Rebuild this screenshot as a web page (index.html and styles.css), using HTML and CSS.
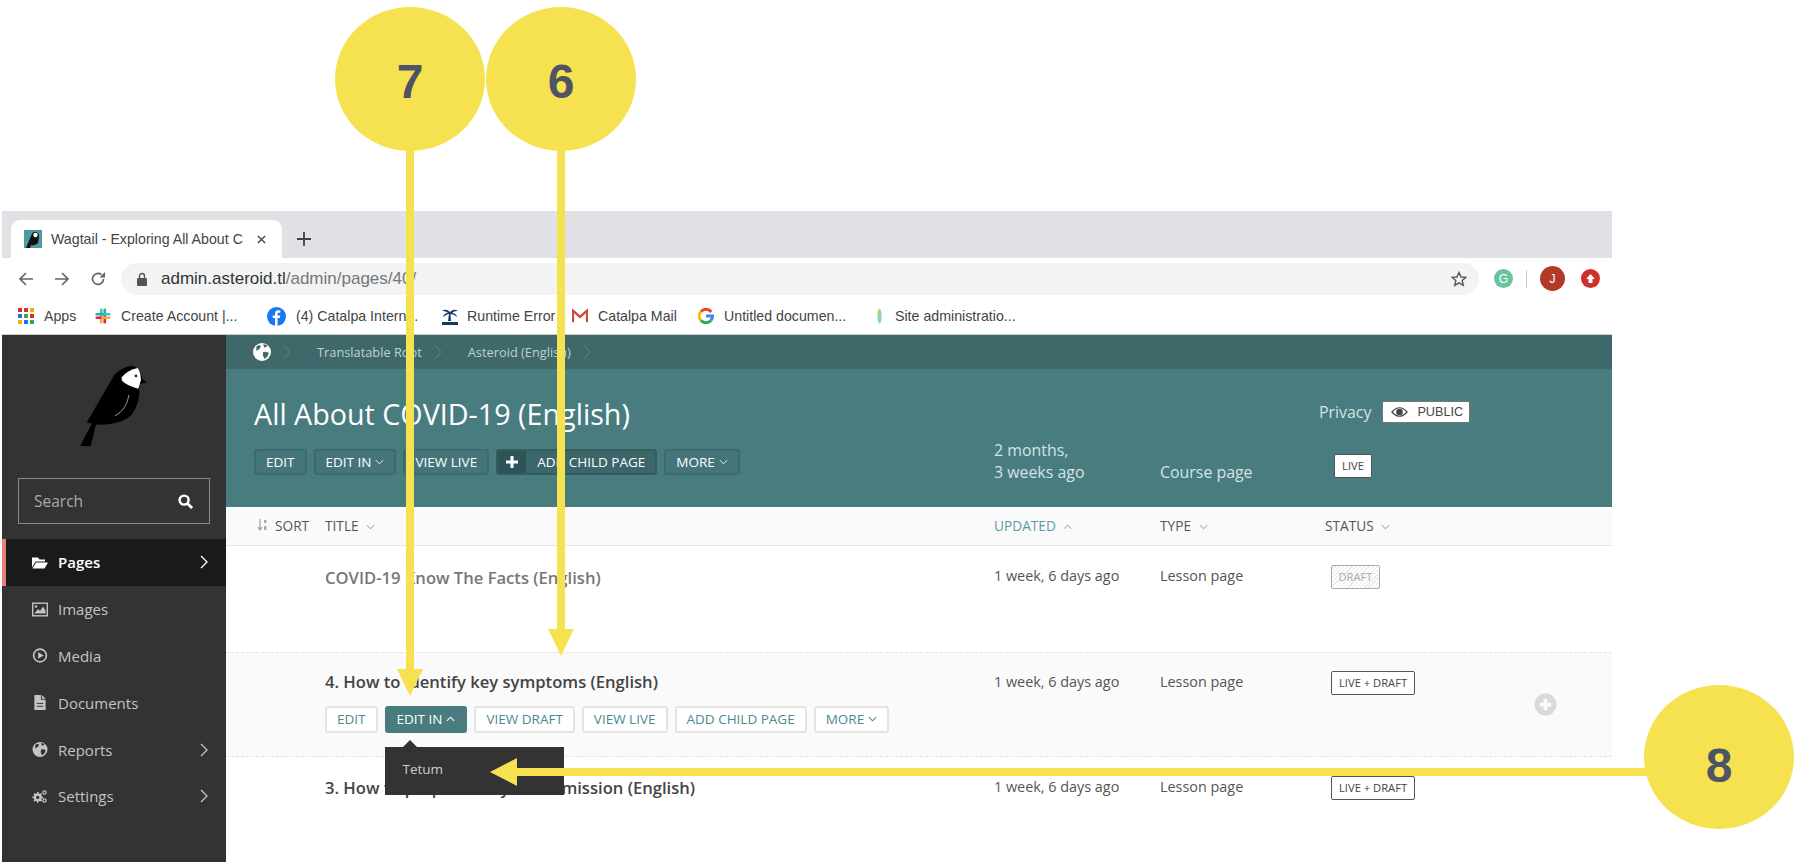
FILE: index.html
```html
<!DOCTYPE html>
<html lang="en">
<head>
  <meta charset="UTF-8" />
  <title>Wagtail - Exploring All About COVID-19</title>
  <link rel="stylesheet" href="styles.css">
</head>
<body>

<div class="browser">
  <div class="tabbar">
    <div class="tab">
      <svg class="favicon" viewBox="0 0 18 18"><rect width="18" height="18" fill="#4d9ba0"/><path d="M2 18L7 6Q9 1 12 2Q15 3 15 6L14 13Q11 16 7 15L6 18Z" fill="#111"/><circle cx="11.5" cy="5" r="2.2" fill="#fff"/></svg>
      <span class="tab-title">Wagtail - Exploring All About C</span>
      <svg class="tab-close" viewBox="0 0 10 10"><path d="M1 1L9 9M9 1L1 9" stroke="#444" stroke-width="1.5"/></svg>
    </div>
    <svg class="tab-new" viewBox="0 0 14 14"><path d="M7 0V14M0 7H14" stroke="#444" stroke-width="1.8"/></svg>
  </div>

  <div class="toolbar">
    <svg class="nav-icon" viewBox="0 0 16 16"><path d="M15 8H2M8 2L2 8L8 14" fill="none" stroke="#666" stroke-width="1.7"/></svg>
    <svg class="nav-icon" viewBox="0 0 16 16"><path d="M1 8H14M8 2L14 8L8 14" fill="none" stroke="#666" stroke-width="1.7"/></svg>
    <svg class="nav-icon" viewBox="0 0 16 16"><path d="M13.5 8A5.5 5.5 0 1 1 11.5 3.7" fill="none" stroke="#666" stroke-width="1.7"/><path d="M9.5 6.5H15V1Z" fill="#666"/></svg>
    <div class="omnibox">
      <svg class="lock" viewBox="0 0 10 14"><path d="M2.5 6V4A2.5 2.5 0 0 1 7.5 4V6" fill="none" stroke="#555" stroke-width="1.4"/><rect y="6" width="10" height="8" rx="1" fill="#555"/></svg>
      <span class="url"><b>admin.asteroid.tl</b>/admin/pages/40/</span>
      <svg class="star" viewBox="0 0 16 16"><path d="M8 1.5L10 6L14.8 6.4L11.2 9.6L12.3 14.4L8 11.8L3.7 14.4L4.8 9.6L1.2 6.4L6 6Z" fill="none" stroke="#555" stroke-width="1.4"/></svg>
    </div>
    <div class="ext ext-g">G</div>
    <div class="ext-sep"></div>
    <div class="ext ext-j">J</div>
    <div class="ext ext-up"><svg viewBox="0 0 10 10"><path d="M5 1L9 5.5H6.8V9H3.2V5.5H1Z" fill="#fff"/></svg></div>
  </div>

  <div class="bookmarks">
    <div class="bm">
      <svg class="bm-icon" viewBox="0 0 16 16"><g fill="#d93025"><rect width="4" height="4"/><rect x="6" width="4" height="4"/></g><rect x="12" width="4" height="4" fill="#f9ab00"/><rect y="6" width="4" height="4" fill="#1a73e8"/><rect x="6" y="6" width="4" height="4" fill="#34a853"/><rect x="12" y="6" width="4" height="4" fill="#d93025"/><rect y="12" width="4" height="4" fill="#f9ab00"/><rect x="6" y="12" width="4" height="4" fill="#1a73e8"/><rect x="12" y="12" width="4" height="4" fill="#34a853"/></svg>
      <span>Apps</span>
    </div>
    <div class="bm">
      <svg class="bm-icon" viewBox="0 0 18 18"><g stroke-width="3" stroke-linecap="round"><path d="M7 2V9" stroke="#36c5f0"/><path d="M2 7H9" stroke="#2eb67d"/><path d="M11 16V9" stroke="#e01e5a"/><path d="M16 11H9" stroke="#ecb22e"/><path d="M11 2V7" stroke="#2eb67d"/><path d="M7 16V11" stroke="#ecb22e"/><path d="M16 7H12" stroke="#36c5f0"/><path d="M2 11H6" stroke="#e01e5a"/></g></svg>
      <span>Create Account |...</span>
    </div>
    <div class="bm">
      <svg class="bm-icon bm-fb" viewBox="0 0 18 18"><circle cx="9" cy="9" r="9" fill="#1877f2"/><path d="M10 18V10.5H12.2L12.6 8H10V6.6Q10 5.4 11.2 5.4H12.7V3.2Q11.8 3 10.8 3Q7.6 3 7.6 6.2V8H5.4V10.5H7.6V18Z" fill="#fff"/></svg>
      <span>(4) Catalpa Intern...</span>
    </div>
    <div class="bm">
      <svg class="bm-icon bm-palm" viewBox="0 0 20 18"><path d="M10 5Q6 1 2 4Q6 3.500 8 6Q4 6 3 10Q7 7 9 7L8 14H11L10.500 7Q14 7 17 10Q16 6 12 6Q14 3.500 18 4Q14 1 10 5Z" fill="#17375e"/><path d="M2 15H18V18H2Z" fill="#17375e"/></svg>
      <span>Runtime Error</span>
    </div>
    <div class="bm">
      <svg class="bm-icon" viewBox="0 0 18 16"><path d="M1 15V2L9 9L17 2V15" fill="none" stroke="#d0473a" stroke-width="2.6"/></svg>
      <span>Catalpa Mail</span>
    </div>
    <div class="bm">
      <svg class="bm-icon" viewBox="0 0 16 16"><g fill="none" stroke-width="3"><path d="M13.2 4A6.500 6.500 0 0 0 3 3.600" stroke="#ea4335"/><path d="M3 3.600A6.500 6.500 0 0 0 3 12.400" stroke="#fbbc05"/><path d="M3 12.400A6.500 6.500 0 0 0 13 12.400" stroke="#34a853"/><path d="M13 12.400Q14.500 10.500 14.500 8H8" stroke="#4285f4"/></g></svg>
      <span>Untitled documen...</span>
    </div>
    <div class="bm bm-site">
      <svg class="bm-leaf" viewBox="0 0 6 18"><defs><linearGradient id="leaf" x1="0" y1="0" x2="0" y2="1"><stop offset="0" stop-color="#b9d66b"/><stop offset="1" stop-color="#6fd0e6"/></linearGradient></defs><ellipse cx="3" cy="9" rx="2.500" ry="9" fill="url(#leaf)"/></svg>
      <span>Site administratio...</span>
    </div>
  </div>

  <div class="app">
    <aside class="sidebar">
      <svg class="logo" viewBox="240 88 205 248">
        <path d="M240 333L276 265L260 262L345 115Q375 90 400 90Q425 100 428 130L442 140L418 146Q425 200 395 240Q360 272 288 268L272 333Z" fill="#000"/>
        <path d="M366 125Q385 102 414 97Q424 110 424 134L416 160Q380 150 366 135Z" fill="#fff"/>
        <circle cx="409" cy="121" r="4" fill="#222"/>
        <path d="M388 178Q380 225 345 242" fill="none" stroke="#ddd" stroke-width="2"/>
      </svg>
      <div class="search">
        <span>Search</span>
        <svg viewBox="0 0 16 16"><circle cx="6.500" cy="6.500" r="4.800" fill="none" stroke="#fff" stroke-width="2.600"/><path d="M10 10L15 15" stroke="#fff" stroke-width="3"/></svg>
      </div>
      <nav class="menu">
        <a class="menu-item active">
          <svg viewBox="0 0 16 14"><path d="M0 2H6L7.500 4H13V6H3.500L0 12Z M4 7H16L12.500 13H0.500Z" fill="currentColor"/></svg>
          <span>Pages</span>
          <svg class="chev" viewBox="0 0 8 14"><path d="M1 1L7 7L1 13" fill="none" stroke="currentColor" stroke-width="1.300"/></svg>
        </a>
        <a class="menu-item">
          <svg viewBox="0 0 16 14"><rect x=".7" y=".7" width="14.600" height="12.600" fill="none" stroke="currentColor" stroke-width="1.400"/><path d="M2.500 11L6 6.500L8 8.500L11 4L13.500 8V11Z" fill="currentColor"/><circle cx="4" cy="4" r="1.300" fill="currentColor"/></svg>
          <span>Images</span>
        </a>
        <a class="menu-item">
          <svg viewBox="0 0 16 16"><circle cx="8" cy="8" r="6.800" fill="none" stroke="currentColor" stroke-width="1.800"/><path d="M6 4.500L12 8L6 11.500Z" fill="currentColor"/></svg>
          <span>Media</span>
        </a>
        <a class="menu-item">
          <svg viewBox="0 0 16 16"><path d="M2 0H9V5H14V16H2Z M10 0L14 4H10Z" fill="currentColor"/><path d="M4.500 9H11.500M4.500 12H11.500" stroke="#333" stroke-width="1"/></svg>
          <span>Documents</span>
        </a>
        <a class="menu-item">
          <svg viewBox="0 0 16 16"><circle cx="8" cy="8" r="8" fill="currentColor"/><path d="M3 3Q6 1 7 3Q6 6 3 7Z M9 8Q13 7 14 9Q13 13 10 14Q8 11 9 8Z M9 1Q12 1 13 3L10 4Z" fill="#333"/></svg>
          <span>Reports</span>
          <svg class="chev" viewBox="0 0 8 14"><path d="M1 1L7 7L1 13" fill="none" stroke="currentColor" stroke-width="1.300"/></svg>
        </a>
        <a class="menu-item">
          <svg viewBox="0 0 18 16"><g fill="none" stroke="currentColor"><circle cx="6.500" cy="9" r="3.200" stroke-width="3"/><circle cx="14" cy="3.500" r="1.800" stroke-width="1.400"/><circle cx="14" cy="12.500" r="1.800" stroke-width="1.400"/></g><path d="M6.500 3V15M0.500 9H12.500M2.300 4.800L10.700 13.200M10.700 4.800L2.300 13.200" stroke="currentColor" stroke-width="1.800"/><circle cx="6.500" cy="9" r="1.800" fill="#333"/></svg>
          <span>Settings</span>
          <svg class="chev" viewBox="0 0 8 14"><path d="M1 1L7 7L1 13" fill="none" stroke="currentColor" stroke-width="1.300"/></svg>
        </a>
      </nav>
    </aside>

    <main class="content">
      <div class="crumbs">
        <svg class="crumb-globe" viewBox="0 0 16 16"><circle cx="8" cy="8" r="8" fill="#fff"/><path d="M3 3Q6 1 7 3Q6 6 3 7Z M9 8Q13 7 14 9Q13 13 10 14Q8 11 9 8Z M9 1Q12 1 13 3L10 4Z" fill="#3e6869"/></svg>
        <svg class="crumb-sep" viewBox="0 0 8 14"><path d="M1 0L7 7L1 14" fill="none" stroke="#4f7d7f" stroke-width="1.200"/></svg>
        <span class="crumb">Translatable Root</span>
        <svg class="crumb-sep" viewBox="0 0 8 14"><path d="M1 0L7 7L1 14" fill="none" stroke="#4f7d7f" stroke-width="1.200"/></svg>
        <span class="crumb">Asteroid (English)</span>
        <svg class="crumb-sep" viewBox="0 0 8 14"><path d="M1 0L7 7L1 14" fill="none" stroke="#4f7d7f" stroke-width="1.200"/></svg>
      </div>

      <header class="page-head">
        <div class="head-main">
          <h1>All About COVID-19 (English)</h1>
          <div class="btns">
            <a class="btn">Edit</a>
            <a class="btn">Edit in <svg class="caret" viewBox="0 0 10 6"><path d="M1 1L5 5L9 1" fill="none" stroke="currentColor" stroke-width="1"/></svg></a>
            <a class="btn">View live</a>
            <a class="btn btn-add"><i><svg viewBox="0 0 12 12"><path d="M6 0V12M0 6H12" stroke="#fff" stroke-width="3"/></svg></i><span>Add child page</span></a>
            <a class="btn">More <svg class="caret" viewBox="0 0 10 6"><path d="M1 1L5 5L9 1" fill="none" stroke="currentColor" stroke-width="1"/></svg></a>
          </div>
        </div>
        <div class="head-cell">2 months,<br>3 weeks ago</div>
        <div class="head-cell">Course page</div>
        <div class="head-status">
          <div class="privacy">
            <span>Privacy</span>
            <span class="public">
              <svg viewBox="0 0 18 12"><path d="M1 6Q9 -3 17 6Q9 15 1 6Z" fill="none" stroke="#444" stroke-width="1.300"/><circle cx="9" cy="6" r="3.500" fill="#444"/></svg>
              PUBLIC
            </span>
          </div>
          <span class="badge badge-live">LIVE</span>
        </div>
      </header>

      <div class="row-grid table-head">
        <div class="sort">
          <svg viewBox="0 0 10 12"><path d="M3 0V10M1 8L3 11L5 8" fill="none" stroke="#999" stroke-width="1.100"/><path d="M7 1H9.500V4H7ZM7 7H9.500V11H7Z" fill="#aaa"/></svg>
          Sort
        </div>
        <div>Title <svg class="caret" viewBox="0 0 10 6"><path d="M1 1L5 5L9 1" fill="none" stroke="#888" stroke-width="1"/></svg></div>
        <div class="sorted">Updated <svg class="caret" viewBox="0 0 10 6"><path d="M1 5L5 1L9 5" fill="none" stroke="#5b9aa0" stroke-width="1"/></svg></div>
        <div>Type <svg class="caret" viewBox="0 0 10 6"><path d="M1 1L5 5L9 1" fill="none" stroke="#888" stroke-width="1"/></svg></div>
        <div>Status <svg class="caret" viewBox="0 0 10 6"><path d="M1 1L5 5L9 1" fill="none" stroke="#888" stroke-width="1"/></svg></div>
      </div>

      <div class="row-grid page-row row-first">
        <div class="title-cell"><h2 class="muted">COVID-19 Know The Facts (English)</h2></div>
        <div class="cell">1 week, 6 days ago</div>
        <div class="cell">Lesson page</div>
        <div class="cell"><span class="badge badge-draft">DRAFT</span></div>
      </div>

      <div class="row-grid page-row hovered">
        <div class="title-cell">
          <h2>4. How to identify key symptoms (English)</h2>
          <div class="actions">
            <a class="act">Edit</a>
            <div class="act-wrap">
              <a class="act act-on">Edit in <svg class="caret" viewBox="0 0 10 6"><path d="M1 5L5 1L9 5" fill="none" stroke="currentColor" stroke-width="1.200"/></svg></a>
              <div class="dropdown">Tetum</div>
            </div>
            <a class="act">View draft</a>
            <a class="act">View live</a>
            <a class="act">Add child page</a>
            <a class="act">More <svg class="caret" viewBox="0 0 10 6"><path d="M1 1L5 5L9 1" fill="none" stroke="currentColor" stroke-width="1.200"/></svg></a>
          </div>
        </div>
        <div class="cell">1 week, 6 days ago</div>
        <div class="cell">Lesson page</div>
        <div class="cell"><span class="badge">LIVE + DRAFT</span></div>
        <div class="add-cell">
          <svg viewBox="0 0 24 24"><circle cx="12" cy="12" r="11.500" fill="#d9d9d9"/><path d="M12 6V18M6 12H18" stroke="#fafafa" stroke-width="4"/></svg>
        </div>
      </div>

      <div class="row-grid page-row">
        <div class="title-cell"><h2>3. How to prepare for your admission (English)</h2></div>
        <div class="cell">1 week, 6 days ago</div>
        <div class="cell">Lesson page</div>
        <div class="cell"><span class="badge">LIVE + DRAFT</span></div>
      </div>
    </main>
  </div>
</div>

<!-- callouts drawn over the screenshot -->
<svg class="callouts" width="1802" height="862" viewBox="0 0 1802 862">
  <g fill="#f6e250">
    <ellipse cx="410" cy="79" rx="75" ry="72"/>
    <ellipse cx="561" cy="79" rx="75" ry="72"/>
    <ellipse cx="1719" cy="757" rx="75" ry="72"/>
    <rect x="406" y="150" width="8" height="520"/>
    <path d="M397 669H423L410 696Z"/>
    <rect x="557" y="150" width="8" height="480"/>
    <path d="M548 629H574L561 656Z"/>
    <rect x="517" y="768" width="1135" height="8"/>
    <path d="M517 758V786L490 772Z"/>
  </g>
  <g class="callout-num">
    <text x="410" y="98">7</text>
    <text x="561" y="98">6</text>
    <text x="1719" y="782">8</text>
  </g>
</svg>

</body>
</html>
```

FILE: styles.css
```css
html, body {
  margin: 0;
  padding: 0;
  background: #fff;
}

body {
  width: 1802px;
  height: 862px;
  overflow: hidden;
  position: relative;
  font-family: 'Open Sans', sans-serif;
}

svg {
  display: block;
}

/* browser chrome */
.browser {
  margin: 211px 0 0 2px;
  width: 1610px;
  height: 651px;
  display: flex;
  flex-direction: column;
}

.tabbar {
  height: 47px;
  background: #dfe1e5;
  display: flex;
  align-items: flex-end;
  padding-left: 9px;
  box-sizing: border-box;
  flex: none;
}

.tab {
  width: 271px;
  height: 38px;
  background: #fff;
  border-radius: 9px 9px 0 0;
  display: flex;
  align-items: center;
  padding-left: 13px;
  box-sizing: border-box;
  font: 14.2px 'Liberation Sans', sans-serif;
  color: #444;
}

.favicon {
  width: 18px;
  height: 18px;
  margin-right: 9px;
}

.tab-title {
  width: 194px;
  overflow: hidden;
  white-space: nowrap;
}

.tab-close {
  width: 9px;
  height: 9px;
  margin-left: 12px;
}

.tab-new {
  width: 14px;
  height: 14px;
  margin: 0 0 12px 15px;
}

.toolbar {
  height: 42px;
  display: flex;
  align-items: center;
  padding: 0 0 1px 16px;
  flex: none;
  box-sizing: border-box;
}

.nav-icon {
  width: 16px;
  height: 16px;
  margin-right: 20px;
}

.omnibox {
  width: 1358px;
  height: 32px;
  margin-left: -5px;
  background: #f1f3f4;
  border-radius: 16px;
  display: flex;
  align-items: center;
  padding-left: 16px;
  box-sizing: border-box;
  font: 17px 'Liberation Sans', sans-serif;
  color: #777;
}

.lock {
  width: 10px;
  height: 14px;
  margin-right: 14px;
}

.url b {
  font-weight: normal;
  color: #333;
}

.star {
  width: 16px;
  height: 16px;
  margin-left: auto;
  margin-right: 12px;
}

.ext {
  border-radius: 50%;
  display: flex;
  align-items: center;
  justify-content: center;
  color: #fff;
  font: 12px 'Liberation Sans', sans-serif;
}

.ext-g {
  width: 19px;
  height: 19px;
  margin-left: 15px;
  background: #6cc3a0;
}

.ext-sep {
  width: 1px;
  height: 18px;
  background: #ccc;
  margin: 0 13px;
}

.ext-j {
  width: 25px;
  height: 25px;
  background: #b33a2b;
}

.ext-up {
  width: 19px;
  height: 19px;
  margin-left: 16px;
  background: #d0302b;
}

.ext-up svg {
  width: 11px;
  height: 11px;
}

.bookmarks {
  height: 35px;
  padding: 0 0 2px 16px;
  display: grid;
  grid-template-columns: 77px 172px 173px 132px 126px 172px auto;
  align-items: center;
  font: 14.2px 'Liberation Sans', sans-serif;
  color: #444;
  border-bottom: 1px solid #ccc;
  box-sizing: border-box;
  flex: none;
}

.bm {
  display: flex;
  align-items: center;
  gap: 10px;
  white-space: nowrap;
}

.bm-icon {
  width: 16px;
  height: 16px;
}

.bm-fb {
  width: 19px;
  height: 19px;
}

.bm-palm {
  width: 20px;
  height: 18px;
  margin-right: -3px;
}

.bm-site {
  padding-left: 7px;
}

.bm-leaf {
  width: 5px;
  height: 18px;
  margin-right: 3px;
}

/* wagtail admin */
.app {
  flex: 1;
  display: flex;
  min-height: 0;
}

.sidebar {
  width: 224px;
  background: #333;
  flex: none;
  padding-top: 30px;
  box-sizing: border-box;
}

.logo {
  width: 68px;
  height: 82px;
  margin-left: 78px;
}

.search {
  margin: 31px 16px 15px;
  height: 46px;
  border: 1px solid #8a8a8a;
  box-sizing: border-box;
  display: flex;
  align-items: center;
  justify-content: space-between;
  padding: 0 16px 0 15px;
  color: #aaa;
  font-size: 15.5px;
}

.search svg {
  width: 15px;
  height: 15px;
}

.menu-item {
  height: 46.8px;
  display: flex;
  align-items: center;
  padding-left: 30px;
  box-sizing: border-box;
  color: #c4c4c4;
  font-size: 15px;
  font-weight: 500;
}

.menu-item > svg:first-child {
  width: 16px;
  height: 15px;
  margin-right: 10px;
  flex: none;
}

.menu-item.active {
  background: #1a1a1a;
  color: #fff;
  font-weight: 600;
  border-left: 4px solid #e5807a;
  padding-left: 26px;
}

.chev {
  width: 8px;
  height: 14px;
  margin-left: auto;
  margin-right: 18px;
}

.content {
  flex: 1;
  min-width: 0;
}

.crumbs {
  height: 34px;
  background: #3e6869;
  display: flex;
  align-items: center;
  padding-left: 27px;
  font-size: 12.8px;
  color: #bfd2d2;
}

.crumb-globe {
  width: 18px;
  height: 18px;
}

.crumb-sep {
  width: 8px;
  height: 14px;
  margin: 0 26px 0 12px;
}

.page-head {
  height: 138px;
  background: #487c7f;
  display: grid;
  grid-template-columns: 768px 166px 159px 1fr;
  color: #d5e3e3;
  font-size: 15.9px;
  line-height: 22px;
}

.head-main {
  padding: 26px 0 0 28px;
}

h1 {
  margin: 0 0 16px;
  font-size: 28.7px;
  font-weight: 400;
  line-height: 38px;
  color: #fff;
  white-space: nowrap;
}

.btns,
.actions {
  display: flex;
  gap: 7px;
}

.btn {
  height: 26px;
  padding: 0 10px;
  border: 2px solid #3d6a6d;
  border-radius: 3px;
  box-sizing: border-box;
  background: #457578;
  color: #fff;
  font-size: 13.5px;
  text-transform: uppercase;
  display: flex;
  align-items: center;
  white-space: nowrap;
}

.caret {
  width: 9px;
  height: 6px;
  margin-left: 4px;
  display: inline-block;
  vertical-align: middle;
}

.btn-add {
  padding: 0;
  background: #3b666a;
  border-color: #355c5f;
}

.btn-add i {
  width: 28px;
  height: 100%;
  background: #2f5457;
  display: flex;
  align-items: center;
  justify-content: center;
}

.btn-add i svg {
  width: 12px;
  height: 12px;
}

.btn-add span {
  padding: 0 10px 0 11px;
}

.head-cell {
  align-self: end;
  padding-bottom: 24px;
}

.head-status {
  padding-top: 32px;
}

.privacy {
  display: flex;
  align-items: center;
  gap: 11px;
  height: 22px;
}

.public {
  width: 88px;
  height: 22px;
  box-sizing: border-box;
  background: #fff;
  border: 1px solid #777;
  border-radius: 2px;
  display: flex;
  align-items: center;
  gap: 9px;
  padding-left: 8px;
  color: #444;
  font: 12.7px 'Liberation Sans', sans-serif;
}

.public svg {
  width: 17px;
  height: 12px;
}

.badge {
  display: inline-block;
  height: 24px;
  line-height: 22px;
  padding: 0 7px;
  box-sizing: border-box;
  background: #fff;
  border: 1px solid #555;
  border-radius: 2px;
  color: #444;
  font-size: 11.2px;
  white-space: nowrap;
}

.badge-live {
  display: block;
  width: 38px;
  padding: 0;
  text-align: center;
  margin: 31px 0 0 15px;
}

.badge-draft {
  border-color: #aaa;
  color: #aaa;
  width: 49px;
  text-align: center;
  padding: 0;
  background: repeating-linear-gradient(135deg, #fff, #fff 2px, #e8e8e8 2px, #e8e8e8 3px);
}

/* table */
.row-grid {
  display: grid;
  grid-template-columns: 99px 669px 166px 165px 205px 1fr;
}

.table-head {
  height: 39px;
  padding-bottom: 2px;
  background: #fafafa;
  border-bottom: 1px solid #e6e6e6;
  box-sizing: border-box;
  align-items: center;
  font-size: 13.7px;
  text-transform: uppercase;
  color: #555;
}

.sort {
  display: flex;
  align-items: center;
  gap: 8px;
  padding-left: 31px;
  color: #555;
}

.sort svg {
  width: 10px;
  height: 12px;
}

.sorted {
  color: #5b9aa0;
}

.page-row {
  height: 105.5px;
  font-size: 14.4px;
  color: #555;
}

.page-row.hovered {
  background: #fafafa;
  border-top: 1px dashed #e4e4e4;
  border-bottom: 1px dashed #e4e4e4;
  box-sizing: border-box;
}

.title-cell {
  grid-column: 2;
  padding-top: 20px;
}

.row-first .title-cell {
  padding-top: 21px;
}

.hovered .title-cell {
  padding-top: 18px;
}

h2 {
  margin: 0 0 13px;
  font-size: 16.6px;
  font-weight: 600;
  line-height: 22px;
  color: #444;
  white-space: nowrap;
}

h2.muted {
  color: #777;
}

.cell {
  padding-top: 19px;
  line-height: 22px;
}

.hovered .cell {
  padding-top: 18px;
}

.cell .badge {
  margin-left: 6px;
}

.add-cell {
  align-self: center;
}

.add-cell svg {
  width: 23px;
  height: 23px;
  margin-left: 4px;
}

.act-wrap {
  position: relative;
}

.act {
  height: 27px;
  padding: 0 10px;
  background: #fff;
  border: 2px solid #e4e4e4;
  border-radius: 3px;
  box-sizing: border-box;
  color: #4a8a8f;
  font-size: 13.5px;
  text-transform: uppercase;
  display: flex;
  align-items: center;
  white-space: nowrap;
}

.act-on {
  background: #487c7f;
  border-color: #487c7f;
  color: #fff;
}

.dropdown {
  position: absolute;
  top: 41px;
  left: 0;
  width: 179px;
  height: 48px;
  padding: 11px 0 0 18px;
  box-sizing: border-box;
  background: #333;
  color: #ccc;
  font-size: 13.5px;
  line-height: 22px;
}

.dropdown::before {
  content: "";
  position: absolute;
  top: -7px;
  left: 18px;
  border: 7px solid transparent;
  border-top: 0;
  border-bottom-color: #333;
}

/* callouts */
.callouts {
  position: absolute;
  top: 0;
  left: 0;
}

.callout-num text {
  font: bold 48px 'Liberation Sans', sans-serif;
  fill: #4f5464;
  text-anchor: middle;
}
```
